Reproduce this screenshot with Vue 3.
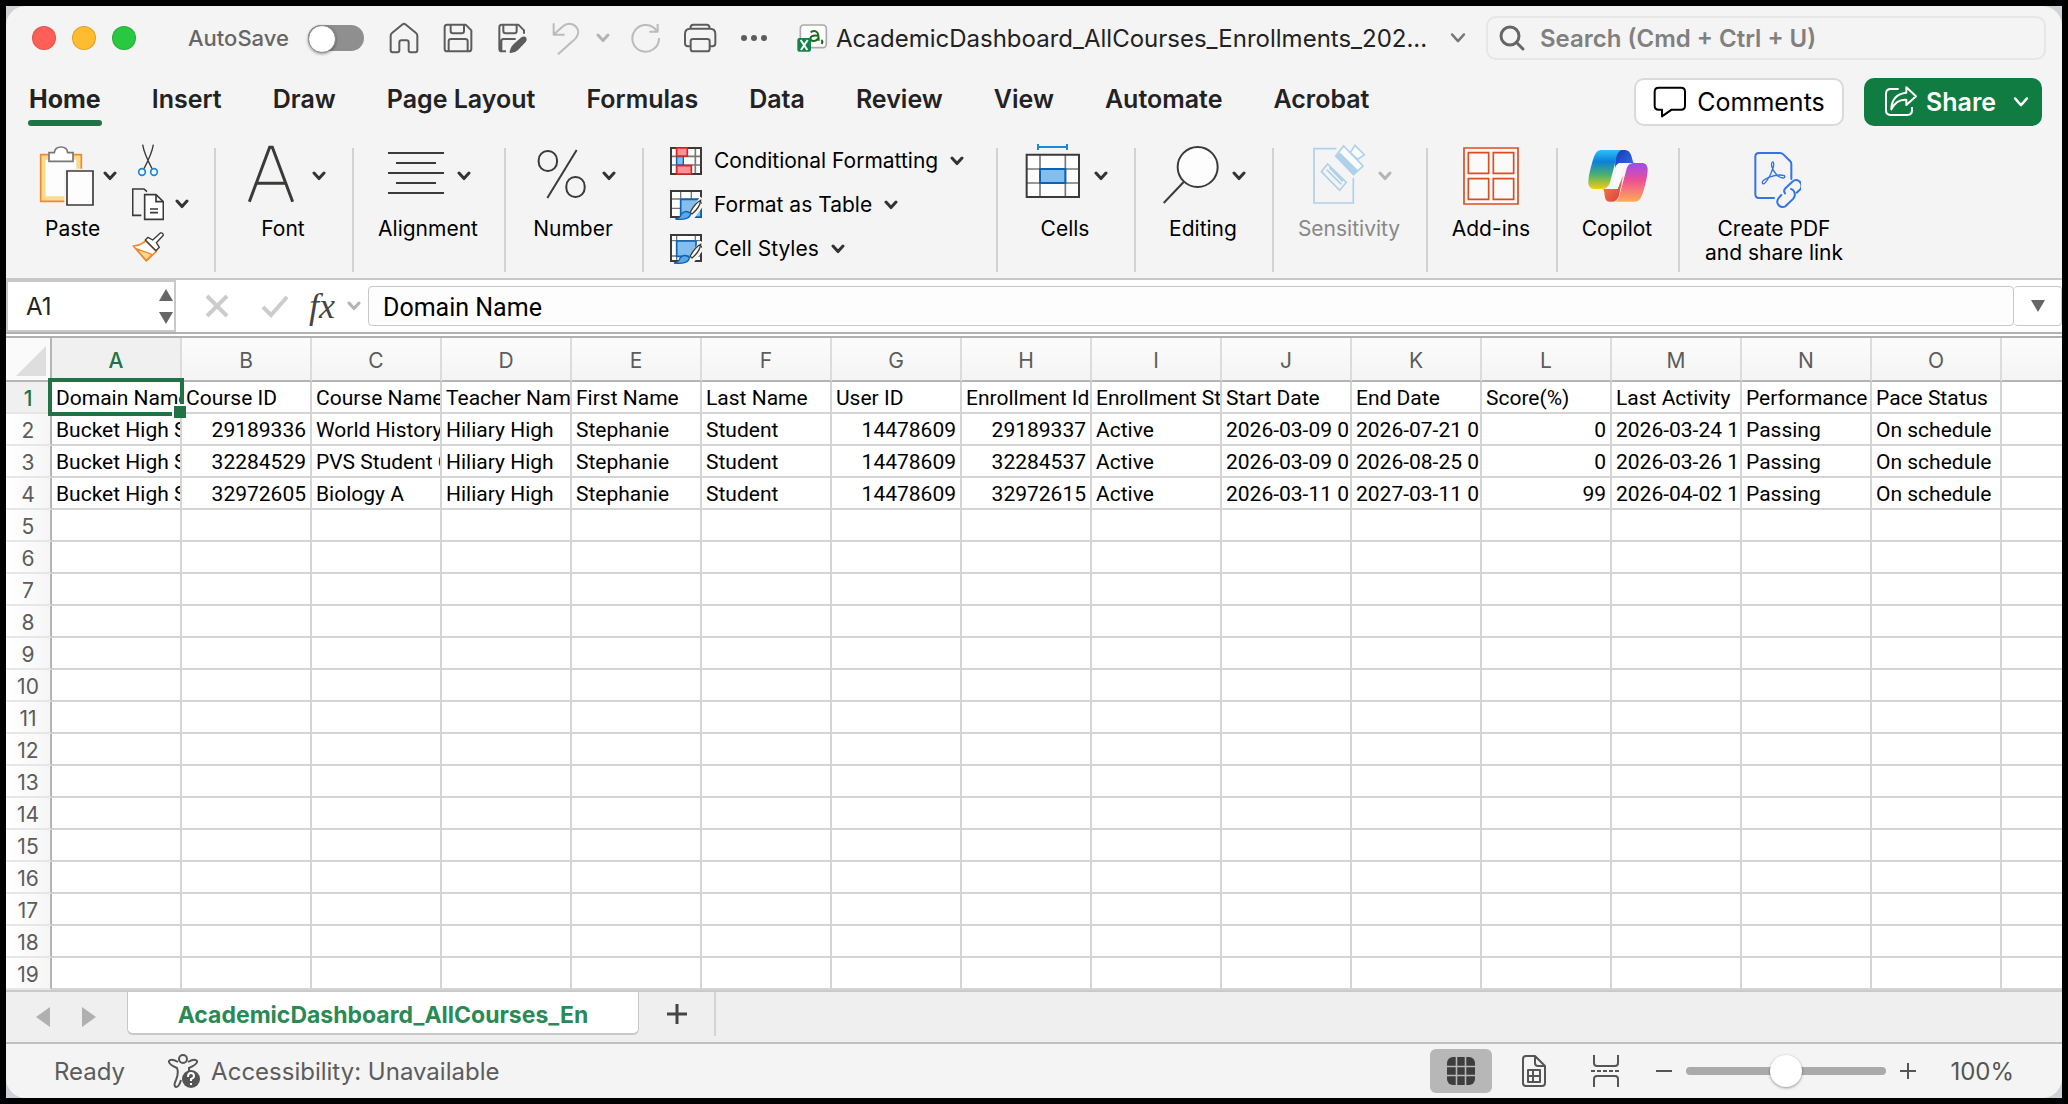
<script setup>
import { h, ref } from 'vue'

const Chevron = () =>
  h('svg', { class: 'chevron', viewBox: '0 0 14 10', 'aria-hidden': 'true' }, [
    h('path', { d: 'M2 2 7 7.6 12 2', fill: 'none', stroke: 'currentColor', 'stroke-linecap': 'round', 'stroke-linejoin': 'round' })
  ])

const autosave = ref(false)
const cellName = ref('A1')
const formula = ref('Domain Name')
const search = ref('')
const zoom = ref(100)

const tabs = ['Home', 'Insert', 'Draw', 'Page Layout', 'Formulas', 'Data', 'Review', 'View', 'Automate', 'Acrobat']
const columns = 'ABCDEFGHIJKLMNO'.split('')

const records = [
  ['Domain Name', 'Course ID', 'Course Name', 'Teacher Name', 'First Name', 'Last Name', 'User ID', 'Enrollment Id', 'Enrollment St', 'Start Date', 'End Date', 'Score(%)', 'Last Activity', 'Performance', 'Pace Status'],
  ['Bucket High S', 29189336, 'World History', 'Hiliary High', 'Stephanie', 'Student', 14478609, 29189337, 'Active', '2026-03-09 0', '2026-07-21 0', 0, '2026-03-24 1', 'Passing', 'On schedule'],
  ['Bucket High S', 32284529, 'PVS Student C', 'Hiliary High', 'Stephanie', 'Student', 14478609, 32284537, 'Active', '2026-03-09 0', '2026-08-25 0', 0, '2026-03-26 1', 'Passing', 'On schedule'],
  ['Bucket High S', 32972605, 'Biology A', 'Hiliary High', 'Stephanie', 'Student', 14478609, 32972615, 'Active', '2026-03-11 0', '2027-03-11 0', 99, '2026-04-02 1', 'Passing', 'On schedule']
]
const rows = Array.from({ length: 19 }, (_, r) => columns.map((_, c) => records[r]?.[c] ?? ''))
</script>

<template>
  <div class="frame">
    <main class="window">
      <header class="titlebar">
        <div class="lights">
          <button class="light red" aria-label="Close"></button>
          <button class="light yellow" aria-label="Minimize"></button>
          <button class="light green" aria-label="Zoom window"></button>
        </div>
        <label class="autosave">AutoSave
          <input v-model="autosave" type="checkbox" role="switch" />
        </label>
        <div class="quick">
          <button aria-label="Home">
            <svg width="32" height="32" viewBox="1164 63 96 96" class="line"><path d="M1172 104v44q0 6 6 6h14q6 0 6-6v-24q0-6 6-6h16q6 0 6 6v24q0 6 6 6h14q6 0 6-6v-44q0-5-4-8l-32-26q-4-3-8 0l-32 26q-4 3-4 8z" /></svg>
          </button>
          <button aria-label="Save">
            <svg width="32" height="32" viewBox="1326 66 96 96" class="line"><path d="M1341 74h56l17 17v55q0 8-8 8h-65q-7 0-7-8v-64q0-8 7-8zM1352 75v18q0 7 7 7h26q7 0 7-7v-18M1346 153v-29q0-7 7-7h43q7 0 7 7v29" /></svg>
          </button>
          <button aria-label="Save as">
            <svg width="32" height="32" viewBox="-8 66 96 96" class="line"><path d="M22 154h-13q-7 0-7-8v-64q0-8 7-8h50l17 17v10M14 75v18q0 7 7 7h26q7 0 7-7v-18M8 153v-29q0-7 7-7h36" /><path d="M33 159q0-15 12-27l24-21q9-4 14 2 3 6-2 13l-23 24q-10 10-25 9z" fill="currentColor" stroke="none" /></svg>
          </button>
          <button class="off undo" aria-label="Undo">
            <svg width="32" height="34" viewBox="154 60 96 102" class="line"><path d="M165 67v34h33M166 100l27-24c24-20 56 4 42 30q-3 6-16 17l-41 37" /></svg>
          </button>
          <button class="off" aria-label="Undo history"><Chevron /></button>
          <button class="off" aria-label="Redo">
            <svg width="32" height="32" viewBox="390 66 96 96" class="line"><path d="M473 72v23h-25M471 94a40 40 0 1 0 6 20" /></svg>
          </button>
          <button aria-label="Print">
            <svg width="36" height="32" viewBox="546 66 108 96" class="line"><path d="M571 139h-7q-9 0-9-9v-28q0-16 16-16h59q16 0 16 16v28q0 9-9 9h-7M571 85q0-11 9-11h40q9 0 9 11M579 117h43q7 0 7 7v22q0 8-7 8h-43q-7 0-7-8v-22q0-7 7-7z" /></svg>
          </button>
          <button aria-label="More commands">
            <svg width="28" height="8" viewBox="0 0 28 8" fill="#5c5c5c"><circle cx="4" cy="4" r="3" /><circle cx="14" cy="4" r="3" /><circle cx="24" cy="4" r="3" /></svg>
          </button>
        </div>
        <button class="filename">
          <svg width="32" height="32" viewBox="890 72 96 96" aria-hidden="true">
            <rect x="903" y="81" width="78" height="68" rx="10" fill="#fff" stroke="#aaa" stroke-width="5" />
            <path d="M934 103q12-8 20 1 4 4 4 24M957 113q-22-3-24 8c0 11 17 11 24 0" fill="none" stroke="#1b6b1f" stroke-width="6" />
            <path d="M966 126q6 4 1 12" fill="none" stroke="#1b6b1f" stroke-width="6" />
            <rect x="894" y="120" width="41" height="41" rx="6" fill="#15824a" />
            <path d="M904 126l20 30M925 126l-20 30" stroke="#fff" stroke-width="6" />
          </svg>
          <span>AcademicDashboard_AllCourses_Enrollments_202...</span>
          <Chevron />
        </button>
        <label class="search">
          <svg width="28" height="28" viewBox="0 0 28 28" class="line thick" aria-hidden="true"><circle cx="12" cy="12" r="9" /><path d="M18.500 18.500 25 25" /></svg>
          <input v-model="search" type="text" placeholder="Search (Cmd + Ctrl + U)" aria-label="Search" />
        </label>
      </header>

      <div class="tabrow">
        <nav class="tabs">
          <a v-for="t in tabs" :key="t" href="#" :class="{ active: t === 'Home' }">{{ t }}</a>
        </nav>
        <button class="comments">
          <svg width="34" height="34" viewBox="336 258 102 102" class="line" aria-hidden="true"><path d="M353 266h67q12 0 12 12v42q0 12-12 12h-28l-29 20v-20h-10q-12 0-12-12v-42q0-12 12-12z" /></svg>
          Comments
        </button>
        <button class="share">
          <svg width="34" height="34" viewBox="1024 255 102 102" class="line" aria-hidden="true"><path d="M1068 267h-24q-14 0-14 14v50q0 14 14 14h50q14 0 14-14v-10M1091 262l29 27-29 26v-16q-30-2-45 29 1-45 45-50z" /></svg>
          Share
          <Chevron />
        </button>
      </div>

      <section class="ribbon" aria-label="Home commands">
        <div class="group clipboard">
          <button class="big paste">
            <span class="face">
              <svg width="56" height="64" viewBox="117 438 168 192">
                <path d="M122 470h122v140h-122z" fill="#fadb8e" stroke="#ef8a34" stroke-width="5" />
                <path d="M137 485h92v110h-92z" fill="#fdfdfd" />
                <path d="M193 512h55v104h-55z" fill="#f4f4f4" />
                <path d="M147 464h16q2-17 20-17t20 17h16v26h-72z" fill="#fff" stroke="#777" stroke-width="5" />
                <path d="M201 519h78v102h-78z" fill="#fdfdfd" stroke="#3b3a38" stroke-width="5" />
              </svg>
              <Chevron />
            </span>
            <span>Paste</span>
          </button>
          <div class="minis">
            <button aria-label="Cut">
              <svg width="32" height="34" viewBox="396 432 96 102" fill="none" stroke-width="4"><path d="M428 434q4 26 28 72M460 434q-4 26-28 72" stroke="#3b3a38" /><circle cx="426" cy="516" r="10" stroke="#1e88d2" stroke-width="5" /><circle cx="462" cy="516" r="10" stroke="#1e88d2" stroke-width="5" /></svg>
            </button>
            <button aria-label="Copy">
              <svg width="32" height="34" viewBox="396 561 96 102" fill="none" stroke="#3b3a38" stroke-width="5"><path d="M424 646h-26v-79h34l9 8" /><path d="M434 584h34l22 21v53h-56z" fill="#fff" /><path d="M468 585v20h21M450 627h24M450 638h24" /></svg>
              <Chevron />
            </button>
            <button aria-label="Format painter">
              <svg width="32" height="32" viewBox="396 693 96 96" fill="none" stroke="#3b3a38" stroke-width="4" stroke-linejoin="round"><path d="M400 738q25-2 37-16l32 32-30 29z" fill="#fff" stroke="#ef8a34" stroke-width="5" /><path d="M408 746l48 17-17 18z" fill="#fadb8e" stroke="#ef8a34" /><path d="M436 720l8-8 14 8 23-21q8-2 9 7l-21 22 9 14-10 10z" fill="#fff" /></svg>
            </button>
          </div>
        </div>
        <div class="group">
          <button class="big">
            <span class="face">
              <svg width="56" height="64" viewBox="729 438 168 192" fill="none" stroke="#3b3a38" stroke-width="9"><path d="M748 611l61-163h8l61 163M772 556h83" /></svg>
              <Chevron />
            </span>
            <span>Font</span>
          </button>
        </div>
        <div class="group wide">
          <button class="big">
            <span class="face">
              <svg width="56" height="64" viewBox="1164 438 168 192" stroke="#3b3a38" stroke-width="6"><path d="M1164 465h168M1188 495h120M1164 525h168M1188 555h120M1164 585h168" /></svg>
              <Chevron />
            </span>
            <span>Alignment</span>
          </button>
        </div>
        <div class="group">
          <button class="big">
            <span class="face">
              <svg width="56" height="64" viewBox="100 438 168 192" fill="none" stroke="#3b3a38" stroke-width="6"><rect x="117" y="459" width="55" height="60" rx="27" /><rect x="200" y="537" width="55" height="60" rx="27" /><path d="M143 600l88-144" /></svg>
              <Chevron />
            </span>
            <span>Number</span>
          </button>
        </div>
        <div class="group styles">
          <div class="stack">
            <button>
              <svg width="32" height="32" viewBox="510 432 96 96">
                <path d="M513 441h90v78h-90z" fill="#fff" /><path d="M513 466h90M513 492h90M530 441v78M586 441v78" stroke="#777" stroke-width="5" />
                <path d="M513 441h90v78h-90z" fill="none" stroke="#3b3a38" stroke-width="6" />
                <path d="M530 467h20v25h-20z" fill="#83beec" stroke="#0a63b5" stroke-width="4" />
                <path d="M530 441h32v24h-32zM530 494h44v25h-44z" fill="#ff9296" stroke="#d8271c" stroke-width="5" />
              </svg>
              Conditional Formatting <Chevron />
            </button>
            <button>
              <svg width="32" height="32" viewBox="510 567 96 96">
                <path d="M513 573h90v78h-90z" fill="#fff" /><path d="M513 597h90M513 625h90M542 573v78M574 573v78" stroke="#777" stroke-width="4" />
                <path d="M513 573h90v78h-90z" fill="none" stroke="#3b3a38" stroke-width="6" />
                <path d="M542 598h61v53h-61z" fill="#83beec" stroke="#0a63b5" stroke-width="5" />
                <path d="M606 594l-48 64M606 612l-32 44" stroke="#f4f4f4" stroke-width="13" />
                <path d="M602 601q-16 7-32 36l6 5q24-20 26-41z" fill="#fff" stroke="#3b3a38" stroke-width="4" />
                <path d="M526 657q16-3 18-15 12-14 28-2-2 22-46 17z" fill="#5aa9e6" stroke="#0a63b5" stroke-width="4" />
              </svg>
              Format as Table <Chevron />
            </button>
            <button>
              <svg width="32" height="32" viewBox="510 699 96 96">
                <path d="M513 705h90v78h-90z" fill="#fff" /><path d="M513 722h90M530 705v78M586 705v78M513 768h90" stroke="#777" stroke-width="4" />
                <path d="M513 705h90v78h-90z" fill="none" stroke="#3b3a38" stroke-width="6" />
                <path d="M530 723h58v46h-58z" fill="#83beec" stroke="#0a63b5" stroke-width="5" />
                <path d="M606 726l-48 64M606 744l-32 44" stroke="#f4f4f4" stroke-width="12" />
                <path d="M602 733q-16 7-32 36l6 5q24-20 26-41z" fill="#fff" stroke="#3b3a38" stroke-width="4" />
                <path d="M522 789q16-3 18-15 12-14 28-2-2 22-46 17z" fill="#5aa9e6" stroke="#0a63b5" stroke-width="4" />
              </svg>
              Cell Styles <Chevron />
            </button>
          </div>
        </div>
        <div class="group">
          <button class="big">
            <span class="face">
              <svg width="56" height="64" viewBox="71 432 168 192">
                <path d="M76 464h157v127h-157z" fill="#fdfdfd" /><path d="M76 507h157M76 549h157M116 464v127M192 464v127" stroke="#777" stroke-width="5" />
                <path d="M76 464h157v127h-157z" fill="none" stroke="#3b3a38" stroke-width="6" /><path d="M116 507h76v42h-76z" fill="#83beec" stroke="#0a63b5" stroke-width="6" />
                <path d="M110 432v18M197 432v18M110 441h87" stroke="#1e88d2" stroke-width="6" />
              </svg>
              <Chevron />
            </span>
            <span>Cells</span>
          </button>
        </div>
        <div class="group">
          <button class="big">
            <span class="face">
              <svg width="56" height="64" viewBox="470 438 168 192" stroke="#3b3a38" stroke-width="6"><circle cx="574" cy="507" r="60" fill="#fdfdfd" /><path d="M532 552l-60 63" /></svg>
              <Chevron />
            </span>
            <span>Editing</span>
          </button>
        </div>
        <div class="group sensitivity">
          <button class="big" disabled>
            <span class="face">
              <svg width="56" height="64" viewBox="902 432 168 192" fill="none" stroke="#afd1e9" stroke-width="5">
                <path d="M984 446h-67v163h118v-75" /><path d="M958 492l56 55-20 24-55-56zM955 509l44 44M963 502l40 42" />
                <path d="M1006 438l58 60-28 26-54-56z" fill="#f9fbfc" /><path d="M985 470l50 53 12-11-52-51z" fill="#afd1e9" /><path d="M1026 458l14-22 28 28-20 14z" fill="#f9fbfc" />
              </svg>
              <Chevron />
            </span>
            <span>Sensitivity</span>
          </button>
        </div>
        <div class="group addins">
          <button class="big">
            <span class="face">
              <svg width="58" height="64" viewBox="1339 432 174 192" fill="#fafafa" stroke="#dd4b21" stroke-width="5"><path d="M1342 444h162v168h-162z" /><path d="M1355 458h61v62h-61zM1430 458h61v62h-61zM1355 536h61v62h-61zM1430 536h61v62h-61z" /></svg>
            </span>
            <span>Add-ins</span>
          </button>
        </div>
        <div class="group copilot">
          <button class="big">
            <span class="face">
              <svg width="62" height="64" viewBox="136 432 186 192">
                <defs>
                  <linearGradient id="cpA" x1="0" y1="0" x2="0" y2="1"><stop offset="0" stop-color="#2ec0f7" /><stop offset=".3" stop-color="#0b80d8" /><stop offset=".65" stop-color="#4fb36b" /><stop offset="1" stop-color="#f6cc10" /></linearGradient>
                  <linearGradient id="cpB" x1="0" y1="0" x2="0" y2="1"><stop offset="0" stop-color="#9b4cf0" /><stop offset=".45" stop-color="#ee4f93" /><stop offset="1" stop-color="#ffab55" /></linearGradient>
                  <linearGradient id="cpC" x1="0" y1="0" x2="1" y2="1"><stop offset="0" stop-color="#1a35b8" /><stop offset="1" stop-color="#2f76e6" /></linearGradient>
                  <linearGradient id="cpD" x1="0" y1="0" x2="1" y2="1"><stop offset="0" stop-color="#fb8a3c" /><stop offset="1" stop-color="#d93a45" /></linearGradient>
                </defs>
                <path d="M222 450h28c20 0 20 28 26 39h-38c-14 0-16 10-18 16z" fill="url(#cpC)" />
                <path d="M184 567h44l16-40-12 60q-6 18-22 18h-6c-20 0-12-32-20-38z" fill="url(#cpD)" />
                <path d="M180 450h60c-14 4-16 24-20 40l-14 54c-4 14-10 23-26 23h-22c-12 0-18-8-18-20 0-18 8-50 16-74 6-16 12-23 24-23z" fill="url(#cpA)" />
                <path d="M280 605h-62c12-3 14-14 18-28l18-68c4-14 10-20 24-20h22c12 0 18 8 18 20 0 18-8 50-16 74-6 16-12 22-22 22z" fill="url(#cpB)" />
                <path d="M232 489h22q-8 6-12 20l-14 58h-24q8-6 12-22l10-40q2-12 6-16z" fill="#fbfbfb" />
              </svg>
            </span>
            <span>Copilot</span>
          </button>
        </div>
        <div class="group pdf">
          <button class="big">
            <span class="face">
              <svg width="52" height="64" viewBox="625 432 156 192" class="blue">
                <path d="M700 594h-45q-11 0-11-11v-113q0-11 11-11h63q6 0 10 4l20 20q4 4 4 9v45" />
                <path d="M665 549c-4-10 40-30 66-22 6 8-10 12-24-4-14-14-18-34-11-37 8 0 0 30-16 54-8 12-13 14-15 9z" stroke-width="4" />
                <path d="M733 580q-6-8 2-16l20-19q10-9 20-2 12 10 5 24l-12 11M722 585l-7 8q-9 10-3 20 8 12 22 6l24-23q8-10 2-22-3-6-9-7" stroke-width="6" />
              </svg>
            </span>
            <span>Create PDF<br />and share link</span>
          </button>
        </div>
      </section>

      <section class="formulabar">
        <div class="namebox">
          <input v-model="cellName" type="text" aria-label="Name box" />
          <div class="spin">
            <button aria-label="Up"><svg width="14" height="12" viewBox="0 0 14 12"><path d="M7 0l7 12h-14z" /></svg></button>
            <button aria-label="Down"><svg width="14" height="12" viewBox="0 0 14 12"><path d="M7 12l7-12h-14z" /></svg></button>
          </div>
        </div>
        <div class="fx">
          <button aria-label="Cancel"><svg width="28" height="28" viewBox="0 0 28 28" class="edit"><path d="M4 4 24 24M24 4 4 24" /></svg></button>
          <button aria-label="Enter"><svg width="28" height="28" viewBox="0 0 28 28" class="edit"><path d="M2 15 10 23 26 5" /></svg></button>
          <button class="insert" aria-label="Insert function"><i>fx</i></button>
          <button class="off" aria-label="Function list"><Chevron /></button>
        </div>
        <input v-model="formula" class="formula" type="text" aria-label="Formula" />
        <button class="expand" aria-label="Expand formula bar"><svg width="14" height="12" viewBox="0 0 14 12"><path d="M7 12l7-12h-14z" /></svg></button>
      </section>

      <div class="sheet">
        <table>
          <colgroup><col class="rowhead" /><col v-for="c in columns" :key="c" class="data" /><col /></colgroup>
          <thead>
            <tr>
              <td class="corner"><svg width="30" height="30" viewBox="0 0 30 30"><path d="M30 0v30h-30z" fill="#dedede" /></svg></td>
              <th v-for="c in columns" :key="c" scope="col" :class="{ on: c === 'A' }">{{ c }}</th>
              <th class="last"></th>
            </tr>
          </thead>
          <tbody>
            <tr v-for="(row, r) in rows" :key="r">
              <th scope="row" :class="{ on: r === 0 }">{{ r + 1 }}</th>
              <td v-for="(v, c) in row" :key="c" :class="{ num: typeof v === 'number', selected: !r && !c }"><div>{{ v }}</div></td>
              <td class="last"></td>
            </tr>
          </tbody>
        </table>
      </div>

      <div class="sheets">
        <div class="arrows">
          <button aria-label="Previous sheet"><svg width="14" height="20" viewBox="0 0 14 20"><path d="M14 0v20L0 10z" /></svg></button>
          <button aria-label="Next sheet"><svg width="14" height="20" viewBox="0 0 14 20"><path d="M0 0v20L14 10z" /></svg></button>
        </div>
        <button class="sheettab">AcademicDashboard_AllCourses_En</button>
        <button class="add" aria-label="Add sheet"><svg width="20" height="20" viewBox="0 0 20 20"><path d="M10 0v20M0 10h20" stroke="#444" stroke-width="3" /></svg></button>
      </div>

      <footer class="status">
        <span class="ready">Ready</span>
        <button class="access">
          <svg width="32" height="36" viewBox="0 0 32 36" aria-hidden="true">
            <g fill="none" stroke="#555" stroke-width="2"><circle cx="15" cy="6" r="4" /><path d="M10 9q-7-4-9-1-1 3 8 7 2 5-1 12-3 6 0 7 3 0 5-7M20 9q7-4 9-1 1 3-8 7v3" /></g>
            <circle cx="23" cy="26" r="9" fill="#555" /><path d="M20 24q0-4 3-4t3 3q0 2-3 3v2M23 30v2" fill="none" stroke="#fff" stroke-width="2" />
          </svg>
          Accessibility: Unavailable
        </button>
        <div class="views">
          <button class="current" aria-label="Normal view"><svg width="28" height="28" viewBox="0 0 28 28"><rect width="28" height="28" rx="6" fill="#3d3d3d" /><path d="M9.500 0v28M18.500 0v28M0 9.500h28M0 18.500h28" stroke="#b7b7b7" stroke-width="1.600" /></svg></button>
          <button aria-label="Page layout view"><svg width="28" height="34" viewBox="0 0 28 34" class="line"><path d="M6 2h9l10 10v17q0 3-3 3h-16q-3 0-3-3v-24q0-3 3-3zM15 2v7q0 3 3 3h7M8 16h12v12h-12zM8 22h12M13 16v12" /></svg></button>
          <button aria-label="Page break view"><svg width="32" height="34" viewBox="0 0 32 34" class="line"><path d="M4 1v8q0 3 3 3h18q3 0 3-3v-8M4 33v-8q0-3 3-3h18q3 0 3 3v8" /><path d="M1 17h30" stroke-dasharray="4 2" /></svg></button>
        </div>
        <div class="zoom">
          <button aria-label="Zoom out"><svg width="16" height="16" viewBox="0 0 16 16" class="line"><path d="M0 8h16" /></svg></button>
          <input v-model="zoom" type="range" min="0" max="200" aria-label="Zoom" />
          <button aria-label="Zoom in"><svg width="16" height="16" viewBox="0 0 16 16" class="line"><path d="M0 8h16M8 0v16" /></svg></button>
          <span class="pct">{{ zoom }}%</span>
        </div>
      </footer>
    </main>
  </div>
</template>

<style>
body { margin: 0; background: #000; }
</style>

<style scoped>
* { box-sizing: border-box; }
.frame { margin: 6px; background: #cfd2d6; font-family: Inter, "Liberation Sans", sans-serif; color: #000; }
.window { background: #f4f4f4; border-radius: 20px; overflow: hidden; }
button { display: flex; align-items: center; justify-content: center; padding: 0; border: 0; background: none; font: inherit; color: inherit; white-space: nowrap; }
input { font: inherit; color: inherit; min-width: 0; outline: none; }
svg { display: block; flex: none; }
.line { fill: none; stroke: currentColor; stroke-width: 2; stroke-linejoin: round; stroke-linecap: butt; }
.titlebar .quick .line, .comments .line, .share .line { stroke-width: 6px; }
.titlebar .thick { stroke-width: 3; stroke-linecap: round; }
.chevron { width: 14px; height: 10px; color: #333; stroke-width: 3; }
.off { color: #bbb; }
.off .chevron { color: #b4b4b4; }

.titlebar { display: flex; align-items: center; height: 64px; padding: 0 16px 0 26px; font-size: 22px; }
.lights { display: flex; gap: 16px; }
.light { width: 24px; height: 24px; border-radius: 50%; border: 1px solid #0002; }
.red { background: #ff5f57; }
.yellow { background: #febc2e; }
.green { background: #28c840; }
.autosave { display: flex; align-items: center; justify-content: space-between; width: 176px; margin-left: 52px; color: #666; font-weight: 500; }
.autosave input { appearance: none; display: flex; width: 56px; height: 26px; margin: 0; border-radius: 13px; background: #8f8f8f; }
.autosave input::before { content: ""; width: 26px; height: 26px; border-radius: 50%; background: #fff; border: 1px solid #888; box-shadow: 0 1px 3px #0006; }
.quick { display: flex; align-items: center; gap: 22px; margin-left: 24px; color: #5c5c5c; }
.quick .off { margin-right: -2px; color: #bbb; }
.quick .undo { margin-right: -8px; }
.filename { flex: 1 1 0; justify-content: flex-start; margin-left: 28px; color: #222; font-size: 24px; }
.filename span { margin: 0 22px 0 8px; }
.filename .chevron { width: 18px; height: 12px; color: #777; stroke-width: 2; }
.search { display: flex; align-items: center; gap: 14px; width: 560px; height: 44px; padding: 0 10px; border: 2px solid #e6e6e6; border-radius: 10px; color: #666; }
.search input { flex: 1; border: 0; padding: 0; background: none; font-size: 24px; font-weight: 600; }
.search input::placeholder { color: #808080; opacity: 1; }

.tabrow { display: flex; align-items: center; height: 64px; padding: 0 20px 0 22px; }
.tabs { display: flex; flex: 1; gap: 49px; }
.tabs a { position: relative; padding: 5px 1px 11px; line-height: 32px; font-size: 25px; font-weight: 600; color: #222; text-decoration: none; white-space: nowrap; }
.tabs .active { font-weight: 700; }
.tabs .active::after { content: ""; position: absolute; left: 0; right: 0; bottom: 0; height: 6px; border-radius: 3px; background: #217346; }
.comments, .share { height: 48px; border-radius: 10px; font-size: 25px; gap: 10px; }
.comments { width: 210px; border: 2px solid #dadada; background: #fff; }
.share { width: 178px; margin-left: 20px; padding-left: 8px; background: #107c41; color: #fff; font-weight: 600; gap: 8px; }
.share .chevron { width: 18px; height: 12px; margin-left: 8px; color: #fff; stroke-width: 2; }

.ribbon { display: flex; height: 146px; padding: 10px 0 6px; border-bottom: 2px solid #c8c8c8; font-size: 21px; line-height: 24px; }
.group { display: flex; flex: none; width: 138px; justify-content: center; }
.group::after { content: ""; width: 2px; margin-top: 4px; background: #d2d2d2; }
.wide { width: 152px; }
.group > .big { flex: 1; align-self: flex-start; flex-direction: column; gap: 9px; }
.big > span:last-child { padding-right: 2px; }
.face { display: flex; align-items: center; gap: 13px; height: 64px; }
.big:disabled { color: #888; }
.big:disabled .chevron { color: #b4b4b4; }
.clipboard { width: 210px; }
.group > .paste { flex: none; width: 84px; margin-left: 33px; align-items: flex-start; }
.paste .face { gap: 8px; }
.paste > span:last-child { margin-left: 6px; }
.minis { display: flex; flex: 1; flex-direction: column; gap: 9px; margin-left: 9px; }
.minis button { justify-content: flex-start; gap: 11px; height: 34px; }
.styles { width: 354px; }
.stack { flex: 1; padding-left: 26px; margin-top: -5px; }
.stack button { gap: 12px; height: 44px; }
.sensitivity { width: 154px; }
.addins { width: 130px; }
.copilot { width: 122px; }
.pdf { width: 190px; }
.pdf::after { display: none; }
.blue { fill: none; stroke: #3473e6; stroke-width: 6; stroke-linecap: round; }

.formulabar { display: flex; align-items: center; height: 58px; background: #fff; border-bottom: 6px double #b0b0b0; }
.namebox { display: flex; width: 170px; height: 52px; border: 2px solid #c8c8c8; padding: 0 1px 0 18px; }
.namebox input { flex: 1; width: 100%; border: 0; padding: 0; font-size: 24px; color: #222; }
.spin { display: flex; flex-direction: column; justify-content: center; gap: 11px; }
.spin svg, .expand svg { fill: #666; }
.fx { display: grid; grid-template-columns: 58px 48px 38px 16px; justify-items: start; align-items: center; margin: 0 5px 0 27px; }
.fx button { height: 40px; }
.edit { fill: none; stroke: #ccc; stroke-width: 4; }
.insert { color: #444; font: 36px/40px "Liberation Serif", serif; }
.formula { flex: 1; height: 40px; border: 1px solid #c8c8c8; border-radius: 4px; padding: 2px 14px 0; font: 25px Roboto, sans-serif; background: #fdfdfd; }
.expand { width: 48px; height: 40px; border: 1px solid #c8c8c8; border-left: 0; border-radius: 4px; background: #fff; }

.sheet { background: #fff; overflow: hidden; }
table { width: 100%; table-layout: fixed; border-collapse: separate; border-spacing: 0; }
.rowhead { width: 46px; }
.data { width: 130px; }
td, th { padding: 0; border-right: 2px solid #d4d4d4; border-bottom: 2px solid #d4d4d4; }
tbody tr { height: 32px; }
.last { border-right: 0; }
thead tr { height: 44px; }
th { padding-top: 4px; font-size: 21px; font-weight: 400; line-height: 26px; color: #5c5c5c; }
thead th { background: linear-gradient(#fcfcfc, #f4f4f4); border-bottom-color: #b5b5b5; border-right-color: #dcdcdc; }
thead .on { background: #f0f0f0; }
th.on { color: #217346; font-weight: 500; }
tbody th { background: linear-gradient(90deg, #fff, #f6f6f6); border-right-color: #b5b5b5; border-bottom-color: #e6e6e6; }
tbody .on { background: #f0f0f0; }
.corner { border-color: #b5b5b5; background: #fafafa; }
.corner svg { margin: 4px 0 0 10px; }
tbody td { position: relative; font: 21px/28px Roboto, sans-serif; }
tbody td div { height: 30px; padding: 2px 4px 0; overflow: hidden; white-space: nowrap; }
.num { text-align: right; }
.selected::before { content: ""; position: absolute; z-index: 1; inset: -4px; border: 4px solid #217346; }
.selected::after { content: ""; position: absolute; z-index: 2; right: -6px; bottom: -6px; width: 12px; height: 12px; background: #217346; border: solid #fff; border-width: 2px 0 0 2px; }

.sheets { display: flex; height: 54px; background: #efefef; border-top: 2px solid #cacaca; border-bottom: 2px solid #c0c0c0; }
.arrows { display: flex; align-items: center; gap: 32px; padding: 0 31px 0 30px; fill: #b0b0b0; }
.sheettab { height: 43px; min-width: 512px; padding-top: 4px; background: #fff; border: solid #c8c8c8; border-width: 0 1px 2px; border-radius: 0 0 6px 6px; color: #2a8a55; font-size: 23px; font-weight: 700; }
.add { width: 77px; height: 44px; border-right: 2px solid #d4d4d4; }

.status { display: flex; align-items: center; height: 54px; padding: 0 48px; font-size: 24px; color: #5c5c5c; }
.access { gap: 11px; margin-left: 43px; }
.views { display: flex; align-items: center; gap: 28px; margin-left: auto; color: #555; }
.current { width: 62px; height: 44px; border-radius: 6px; background: #b7b7b7; }
.views button:last-child { margin-left: 14px; }
.zoom { display: flex; align-items: center; gap: 14px; margin-left: 34px; color: #555; }
.zoom input { appearance: none; width: 200px; height: 8px; margin: 0; border-radius: 4px; background: #aaa; }
.zoom input::-webkit-slider-thumb { appearance: none; width: 32px; height: 32px; border-radius: 50%; background: #fff; box-shadow: 0 1px 3px #0006; }
.pct { margin-left: 20px; min-width: 64px; text-align: right; }
</style>
